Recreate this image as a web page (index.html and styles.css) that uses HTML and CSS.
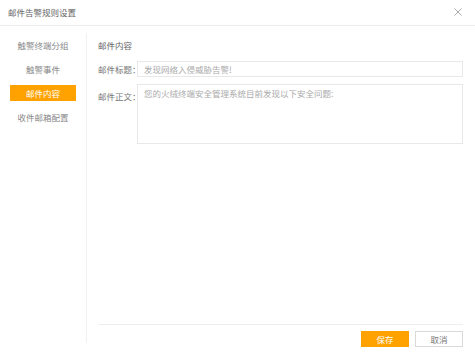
FILE: index.html
```html
<!DOCTYPE html>
<html lang="zh">
<head>
<meta charset="utf-8">
<link rel="stylesheet" href="styles.css">
</head>
<body>
<div class="dialog">
  <div class="header">
    <span class="title">邮件告警规则设置</span>
    <span class="close">
      <svg width="8" height="8" viewBox="0 0 8 8"><path d="M0.5 0.5L7.5 7.5M7.5 0.5L0.5 7.5" stroke="#aaa" stroke-width="1"/></svg>
    </span>
  </div>
  <div class="main">
    <div class="sidebar">
      <div class="menu-item"><span>触警终端分组</span></div>
      <div class="menu-item"><span>触警事件</span></div>
      <div class="menu-item active"><span>邮件内容</span></div>
      <div class="menu-item"><span>收件邮箱配置</span></div>
    </div>
    <div class="content">
      <div class="section-title">邮件内容</div>
      <div class="row">
        <label class="label">邮件标题：</label>
        <div class="input">发现网络入侵威胁告警!</div>
      </div>
      <div class="row row-body">
        <label class="label">邮件正文：</label>
        <div class="textarea">您的火绒终端安全管理系统目前发现以下安全问题:</div>
      </div>
      <div class="spacer"></div>
      <div class="footer">
        <button class="btn primary">保存</button>
        <button class="btn">取消</button>
      </div>
    </div>
  </div>
</div>
</body>
</html>
```
FILE: styles.css
```css
* { box-sizing: border-box; }
html, body { margin: 0; padding: 0; background: #fff; }
body {
  font-family: "Noto Sans CJK SC", "Noto Sans", sans-serif;
  font-size: 8.5px;
  color: #777;
  width: 475px;
  height: 355px;
  overflow: hidden;
}
.dialog { width: 475px; height: 355px; display: flex; flex-direction: column; }
.header {
  height: 26px;
  border-bottom: 1px solid #ececec;
  display: flex;
  align-items: center;
  justify-content: space-between;
  padding: 0 13px 1px 8px;
}
.title { color: #666; }
.close { display: flex; width: 8px; height: 8px; }
.main { flex: 1; display: flex; padding-top: 7px; padding-bottom: 8px; }
.sidebar {
  width: 87px;
  border-right: 1px solid #f0f0f0;
  margin-bottom: 4px;
}
.menu-item {
  height: 24px;
  display: flex;
  align-items: center;
  justify-content: center;
  color: #888;
}
.menu-item span {
  width: 66px;
  height: 16px;
  display: flex;
  align-items: center;
  justify-content: center;
}
.menu-item.active span { background: #ffa200; color: #fff; }
.content {
  flex: 1;
  display: flex;
  flex-direction: column;
  padding: 0 12px 0 11px;
}
.section-title { height: 24px; display: flex; align-items: center; color: #666; }
.row { display: flex; align-items: flex-start; margin-top: 4px; }
.label { width: 39px; flex: none; color: #777; line-height: 16px; white-space: nowrap; }
.input, .textarea {
  flex: 1;
  border: 1px solid #e8e8e8;
  color: #aaa;
  padding: 0 6px;
}
.input { height: 16px; line-height: 14px; }
.row-body { margin-top: 7px; }
.row-body .label { margin-top: 4px; }
.textarea { height: 60px; line-height: 14px; padding-top: 1px; }
.spacer { flex: 1; }
.footer {
  border-top: 1px solid #eee;
  padding-top: 6px;
  display: flex;
  justify-content: flex-end;
  gap: 6px;
}
.btn {
  font-family: inherit;
  font-size: 8.5px;
  width: 48px;
  height: 16px;
  padding: 0;
  border: 1px solid #d9d9d9;
  background: #fff;
  color: #777;
}
.btn.primary { background: #ffa200; border-color: #ffa200; color: #fff; }
```
